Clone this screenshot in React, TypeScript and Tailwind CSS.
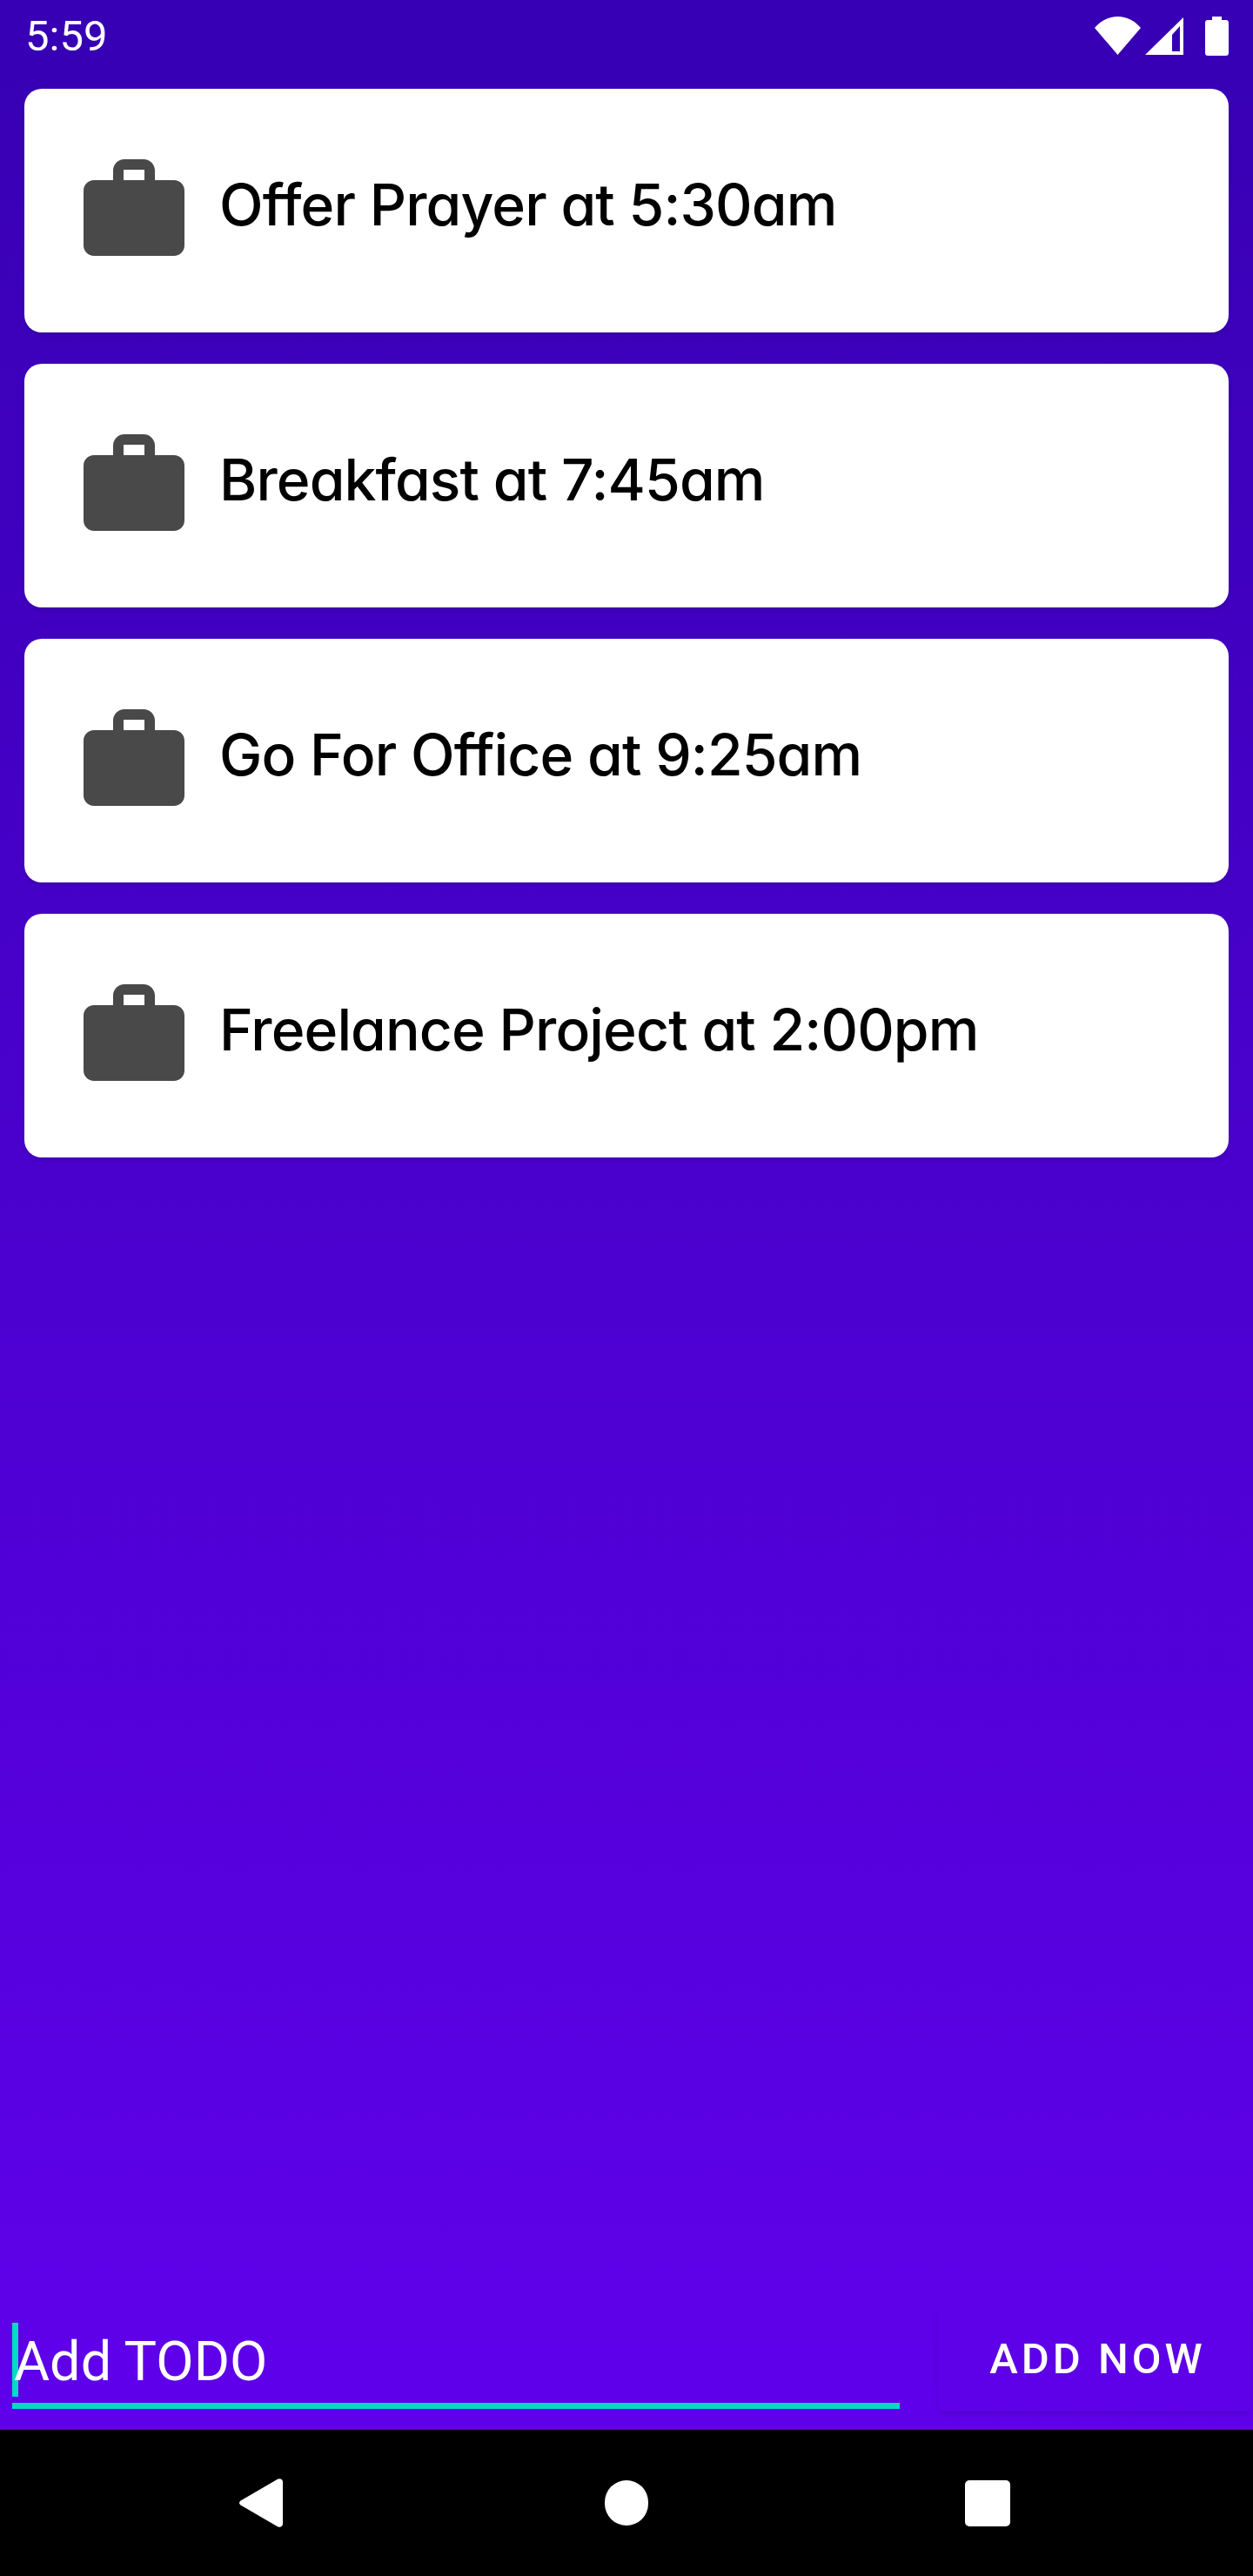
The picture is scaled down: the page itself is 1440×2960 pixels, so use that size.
const todos = [
  "Offer Prayer at 5:30am",
  "Breakfast at 7:45am",
  "Go For Office at 9:25am",
  "Freelance Project at 2:00pm",
];

function BriefcaseIcon() {
  return (
    <svg width="116" height="111" viewBox="0 0 116 111" className="shrink-0">
      <path
        fill="#494949"
        fillRule="evenodd"
        d="M34 24V13C34 5.800 39.800 0 47 0H69C76.200 0 82 5.800 82 13V24H104C110.600 24 116 29.400 116 36V99C116 105.600 110.600 111 104 111H12C5.400 111 0 105.600 0 99V36C0 29.400 5.400 24 12 24H34ZM46 12V24H70V12H46Z"
      />
    </svg>
  );
}

function TodoCard({ title }: { title: string }) {
  return (
    <div className="flex h-[280px] items-center gap-[40px] rounded-[20px] bg-white pb-[7px] pl-[68px] shadow-md">
      <BriefcaseIcon />
      <span className="-mt-[8px] font-['Inter'] text-[66px] font-medium leading-none tracking-[-0.9px] text-black [font-feature-settings:'cv11']">
        {title}
      </span>
    </div>
  );
}

function StatusBar() {
  return (
    <div className="flex h-[102px] justify-between pl-[29px] pr-[28px] pt-[19px]">
      <span className="font-['Roboto'] text-[49px] leading-[45px] text-white">5:59</span>
      <div className="flex h-[45px] items-start">
        <svg width="53" height="44" viewBox="0 0 53 44">
          <path fill="#fff" d="M0 13C7 5 16 0 26.500 0S46 5 53 13L26.500 44Z" />
        </svg>
        <svg width="44" height="43" viewBox="0 0 44 43" className="ml-[5px] mt-px">
          <path fill="#fff" fillRule="evenodd" d="M44 0V43H0ZM40 10 31 20V39H40Z" />
        </svg>
        <svg width="27" height="45" viewBox="0 0 27 45" className="ml-[25px]">
          <path
            fill="#fff"
            d="M8 0H19V4H24C25.700 4 27 5.300 27 7V42C27 43.700 25.700 45 24 45H3C1.300 45 0 43.700 0 42V7C0 5.300 1.300 4 3 4H8Z"
          />
        </svg>
      </div>
    </div>
  );
}

function AddTodoBar() {
  return (
    <div className="flex h-[142px] items-start pl-[14px] pr-[2px]">
      <div className="w-[1020px] pt-[19px]">
        <div className="flex h-[85px] items-center">
          <div className="h-[85px] w-[7px] shrink-0 bg-[#03dac5]" />
          <span className="-ml-[5px] mt-[4px] font-['Roboto'] text-[63px] font-normal leading-none text-white">
            Add TODO
          </span>
        </div>
        <div className="mt-[7px] h-[7px] bg-[#03dac5]" />
      </div>
      <button className="ml-[43px] flex h-[121px] w-[361px] items-center justify-center rounded-[7px] bg-[#5e00e8] pl-[8px] font-['Roboto'] text-[49px] font-medium leading-none tracking-[4px] text-white shadow-md">
        ADD NOW
      </button>
    </div>
  );
}

function NavBar() {
  return (
    <div className="flex h-[168px] items-center bg-black pl-[275px]">
      <svg width="50" height="56" viewBox="0 0 50 56">
        <path
          fill="#fff"
          d="M1.500 25.500 44 .800C46.500-.500 50 .500 50 4V52C50 55.500 46.500 56.500 44 55.200L1.500 30.500C-.500 29-.500 27 1.500 25.500Z"
        />
      </svg>
      <div className="ml-[370px] h-[52px] w-[50px] rounded-full bg-white" />
      <div className="ml-[364px] h-[53px] w-[52px] rounded-[5px] bg-white" />
    </div>
  );
}

export default function App() {
  return (
    <div className="flex h-[2960px] w-[1440px] flex-col bg-gradient-to-b from-[#3700b3] to-[#6200ee]">
      <StatusBar />
      <div className="flex flex-1 flex-col gap-[36px] px-[28px]">
        {todos.map((todo) => (
          <TodoCard key={todo} title={todo} />
        ))}
      </div>
      <AddTodoBar />
      <NavBar />
    </div>
  );
}
